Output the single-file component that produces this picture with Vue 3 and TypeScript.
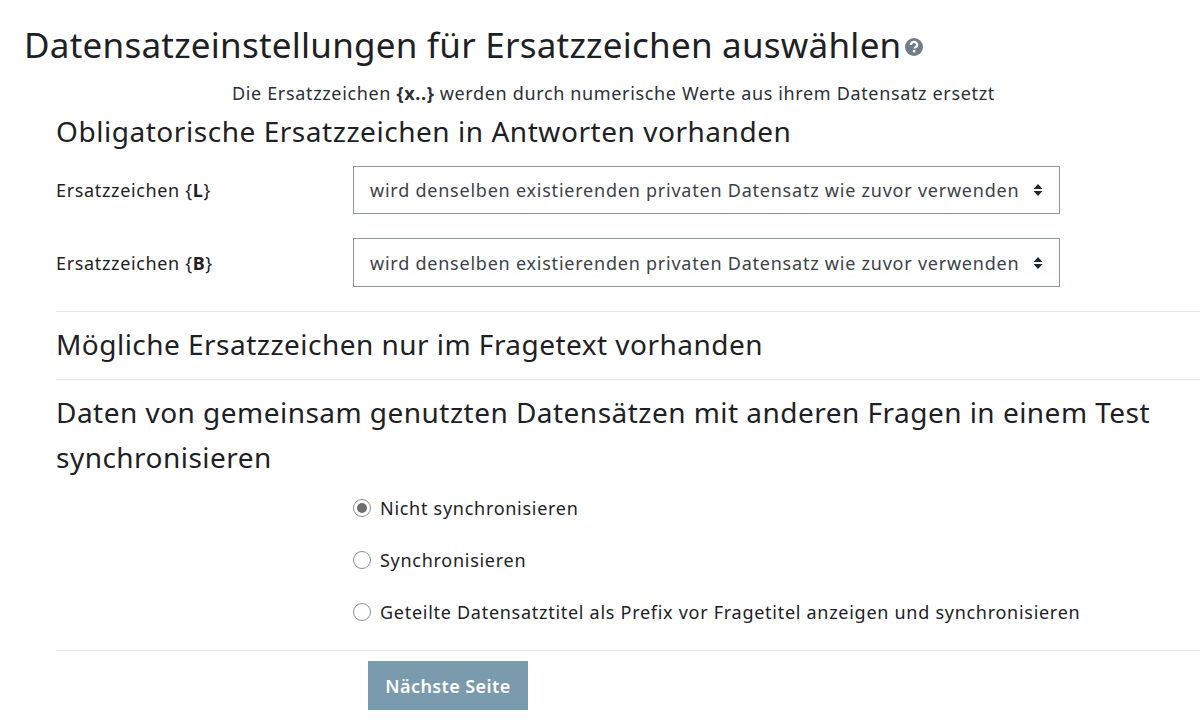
<script setup lang="ts">
const selects = ['L', 'B'];
const radios = [
  { label: 'Nicht synchronisieren', checked: true },
  { label: 'Synchronisieren', checked: false },
  { label: 'Geteilte Datensatztitel als Prefix vor Fragetitel anzeigen und synchronisieren', checked: false },
];
</script>

<template>
  <main class="page">
    <h2 class="title">
      <span>Datensatzeinstellungen für Ersatzzeichen auswählen</span>
      <svg class="help" viewBox="0 0 18 18" aria-hidden="true">
        <circle cx="9" cy="9" r="9" fill="#6f7e88" />
        <path d="M5.8 7a3.2 3 0 0 1 6.4-.1c0 2.2-2.5 2.1-2.5 3.6" fill="none" stroke="#fff" stroke-width="2.2" />
        <rect x="7.9" y="11.9" width="2.4" height="2.4" fill="#fff" />
      </svg>
    </h2>
    <p class="intro">Die Ersatzzeichen <b>{x..}</b> werden durch numerische Werte aus ihrem Datensatz ersetzt</p>
    <section class="body">
      <h3 class="h first">Obligatorische Ersatzzeichen in Antworten vorhanden</h3>
      <div v-for="s in selects" :key="s" class="row">
        <label class="lab">Ersatzzeichen {<b>{{ s }}</b>}</label>
        <div class="select">
          <span>wird denselben existierenden privaten Datensatz wie zuvor verwenden</span>
          <svg class="caret" viewBox="0 0 10 14" aria-hidden="true">
            <path d="M5 1 9.5 6H.5zM5 13 .5 8h9z" fill="#22272b" />
          </svg>
        </div>
      </div>
      <hr class="rule r1" />
      <h3 class="h second">Mögliche Ersatzzeichen nur im Fragetext vorhanden</h3>
      <hr class="rule r2" />
      <h3 class="h third">Daten von gemeinsam genutzten Datensätzen mit anderen Fragen in einem Test synchronisieren</h3>
      <div class="radios">
        <label v-for="r in radios" :key="r.label" class="radio">
          <span class="dot" :class="{ on: r.checked }"></span>
          <span>{{ r.label }}</span>
        </label>
      </div>
      <hr class="rule r3" />
      <div class="actions"><button class="btn" type="button">Nächste Seite</button></div>
    </section>
  </main>
</template>

<style>
html, body { margin: 0; background: #fff; }
</style>

<style scoped>
.page {
  width: 1200px;
  height: 728px;
  overflow: hidden;
  box-sizing: border-box;
  padding-top: 23px;
  font-family: "Noto Sans", sans-serif;
  color: #1d2125;
}
.title {
  margin: 0 0 0 24px;
  display: flex;
  align-items: center;
  font-weight: 400;
  font-size: 35px;
  letter-spacing: 0.24px;
  line-height: 44px;
  height: 44px;
}
.help { width: 18px; height: 18px; margin: 4px 0 0 4px; }
.intro {
  margin: 14px 0 0 232px;
  font-size: 18px;
  letter-spacing: 0.65px;
  line-height: 24px;
  color: #2b3036;
}
.body { margin-left: 56px; }
.h { margin: 0; font-weight: 400; font-size: 28px; letter-spacing: 0.47px; line-height: 44px; }
.first { margin-top: 4px; letter-spacing: 0.54px; }
.row { display: flex; align-items: center; height: 49px; margin-top: 24px; }
.first + .row { margin-top: 13px; height: 48px; }
.lab { width: 297px; font-size: 18px; letter-spacing: 0.65px; }
.select {
  box-sizing: border-box;
  width: 707px;
  height: 100%;
  border: 1px solid #8f959e;
  display: flex;
  align-items: center;
  justify-content: space-between;
  padding: 0 16px;
  font-size: 18px;
  letter-spacing: 0.77px;
  color: #3c4247;
  white-space: nowrap;
}
.caret { width: 10px; height: 14px; }
.rule { border: 0; border-top: 1px solid #e5e5e5; margin: 0; }
.r1 { margin-top: 24px; }
.second { margin-top: 10px; }
.r2 { margin-top: 13px; }
.third { margin-top: 10px; line-height: 45px; }
.radios { margin-left: 297px; margin-top: 15px; display: flex; flex-direction: column; gap: 26px; }
.radio { display: flex; align-items: center; gap: 9px; font-size: 18px; letter-spacing: 0.72px; line-height: 26px; }
.dot {
  box-sizing: border-box;
  width: 18px;
  height: 18px;
  border-radius: 50%;
  border: 1px solid #8a8f94;
  background: #fff;
  position: relative;
}
.dot.on::after {
  content: "";
  position: absolute;
  inset: 3px;
  border-radius: 50%;
  background: #6e6e6e;
}
.r3 { margin-top: 25px; }
.actions { margin: 10px 0 0 312px; }
.btn {
  width: 160px;
  height: 49px;
  border: 0;
  background: #7a9aae;
  color: #fff;
  font: 600 18px "Noto Sans", sans-serif;
  letter-spacing: 0.4px;
  padding: 0;
}
</style>
